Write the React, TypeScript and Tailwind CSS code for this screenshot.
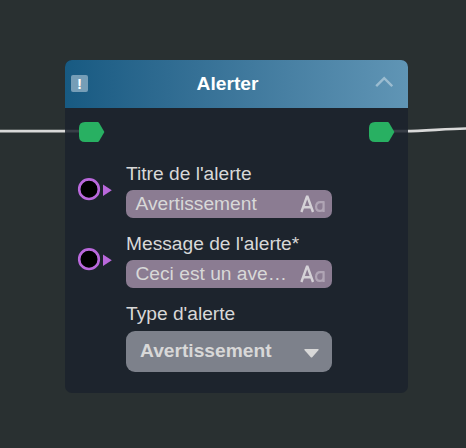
import React from "react";

function CaseIcon() {
  return (
    <svg width="26" height="20" viewBox="0 0 26 20" fill="none" className="shrink-0">
      <path d="M1.4 18 6.9 2.6h.6L13 18M3.2 13.2h8" stroke="#d5d2d7" strokeWidth="2.4" />
      <path d="M24 8.2h-3.6c-2.8 0-4.3 1.9-4.3 4.6s1.5 4.1 3.6 4.1c2.3 0 3.9-1.6 3.9-4V7.2v10.9" stroke="#b0a5b5" strokeWidth="2.2" />
    </svg>
  );
}

function FlowPin() {
  return (
    <svg width="26" height="20" viewBox="0 0 26 20">
      <path d="M6 0h12.6q.9 0 1.4.8L25.4 10l-5.4 9.2q-.5.8-1.4.8H6q-6 0-6-6V6q0-6 6-6z" fill="#28b062" />
    </svg>
  );
}

function DataPin() {
  return (
    <svg width="36" height="24" viewBox="0 0 36 24" className="shrink-0">
      <circle cx="12" cy="12.2" r="9.8" fill="#000" stroke="#ba68dc" strokeWidth="2.6" />
      <path d="M26 7.6 34.8 13.3 26 19z" fill="#ba68dc" />
    </svg>
  );
}

function TextField({ label, value }: { label: string; value: string }) {
  return (
    <div className="flex h-[70px]">
      <div className="w-[49px] shrink-0 pt-[17px]">
        <DataPin />
      </div>
      <div className="w-[206.4px]">
        <div className="h-[30.4px] whitespace-nowrap pt-px text-[19.2px] leading-[26px]">{label}</div>
        <div className="flex h-7 items-center justify-between rounded-[7px] bg-[#8b7c92] pl-[9.5px] pr-[6px]">
          <span className="w-[153px] whitespace-nowrap text-[19.2px] leading-[26px]">{value}</span>
          <CaseIcon />
        </div>
      </div>
    </div>
  );
}

export default function App() {
  return (
    <div className="relative h-[448px] w-[466px] overflow-hidden bg-[#293031] pl-[64.5px] pt-[60px] font-['Liberation_Sans',Arial,sans-serif] text-[#d8d8d8]">
      <svg className="absolute left-0 top-0" width="466" height="448" fill="none" stroke="#d9d9d9" strokeWidth="2.7">
        <path d="M0 131.2H90" />
        <path d="M380 131.2H405C425 131.2 445 128.7 466 128.5" />
      </svg>
      <div className="relative h-[333px] w-[343.5px] overflow-hidden rounded-[7px] bg-[#1b222cda]">
        <div className="flex h-12 items-center bg-linear-to-r from-[#175a82] to-[#6095b5] pl-[6.5px] pr-[15px]">
          <div className="mb-[2px] flex size-[17px] items-center justify-center rounded-[2px] bg-[#769eb7] text-[15px] font-bold leading-none text-white">!</div>
          <div className="flex-1 pr-[8px] text-center text-[19.2px] font-bold leading-6 text-white">Alerter</div>
          <svg width="18" height="12" viewBox="0 0 18 12" fill="none" className="mb-[5px]">
            <path d="M1.2 10.2 9.2 2.2l8 8" stroke="#9bbcd0" strokeWidth="2.4" />
          </svg>
        </div>
        <div className="flex h-[52px] items-start justify-between pl-[14px] pr-[13.5px] pt-[14px]">
          <FlowPin />
          <FlowPin />
        </div>
        <div className="pl-[12.5px]">
          <TextField label="Titre de l'alerte" value="Avertissement" />
          <TextField label="Message de l'alerte*" value="Ceci est un ave…" />
          <div className="ml-[49px] w-[206.4px]">
            <div className="h-[31px] pt-px text-[19.2px] leading-[26px]">Type d'alerte</div>
            <div className="flex h-[41px] items-center justify-between rounded-[9px] bg-[#7d818b] pl-[14px] pr-[13.5px] text-[19.2px] font-bold">
              <span>Avertissement</span>
              <svg width="15" height="9" viewBox="0 0 15 9" className="mt-[3px]">
                <path d="M1 0h13q1 0 .6 1L8.2 8.2q-.7.7-1.4 0L.4 1Q0 0 1 0z" fill="#d8d8d8" />
              </svg>
            </div>
          </div>
        </div>
      </div>
    </div>
  );
}
